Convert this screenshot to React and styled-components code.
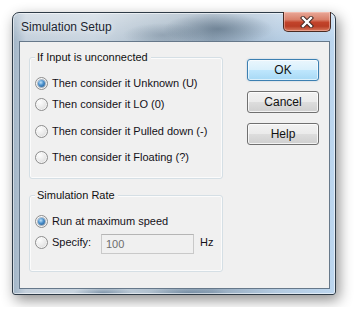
import React from 'react'
import styled, { createGlobalStyle, css } from 'styled-components'

const GlobalStyle = createGlobalStyle`
  body {
    margin: 0;
    background: #ffffff;
    font-family: "Liberation Sans", Arial, sans-serif;
  }
`

const Page = styled.div`
  padding: 12px;
`

const Window = styled.div`
  box-sizing: border-box;
  width: 324px;
  height: 283px;
  border: 1px solid #2e3b47;
  border-radius: 7px 7px 3px 3px;
  box-shadow: 3px 5px 14px rgba(0, 0, 0, 0.45), inset 0 0 0 1px rgba(255, 255, 255, 0.55);
  background:
    radial-gradient(ellipse 55px 16px at 205px 16px, rgba(70, 92, 112, 0.55), transparent),
    radial-gradient(ellipse 40px 12px at 150px 22px, rgba(90, 110, 130, 0.35), transparent),
    radial-gradient(ellipse 30px 6px at 90px 280px, rgba(60, 90, 120, 0.5), transparent),
    radial-gradient(ellipse 40px 6px at 175px 280px, rgba(60, 90, 120, 0.4), transparent),
    linear-gradient(180deg, rgba(255, 255, 255, 0.35), rgba(255, 255, 255, 0) 28px),
    linear-gradient(90deg, #9fb3c5 0%, #c4d0dc 4%, #c9d5e0 25%, #a9bac9 48%, #95a9bc 62%, #b3cae0 82%, #bcd6ef 100%);
  display: flex;
  flex-direction: column;
`

const TitleBar = styled.div`
  height: 28px;
  display: flex;
  justify-content: space-between;
  align-items: flex-start;
`

const Title = styled.div`
  padding: 7px 0 0 8px;
  font-size: 12px;
  color: #1b2530;
  text-shadow: 0 0 6px rgba(255, 255, 255, 0.9);
`

const CloseButton = styled.div`
  box-sizing: border-box;
  width: 48px;
  height: 20px;
  margin: -1px 4px 0 0;
  border: 1px solid #4a2a22;
  border-top: 0;
  border-radius: 0 0 5px 5px;
  background: linear-gradient(180deg, #e9a898 0%, #d9806a 40%, #c2432a 55%, #b93d25 75%, #d97a5e 100%);
  box-shadow: inset 0 0 0 1px rgba(255, 210, 200, 0.45);
  display: flex;
  align-items: center;
  justify-content: center;
`

const Client = styled.div`
  box-sizing: border-box;
  width: 311px;
  height: 248px;
  margin-left: 6px;
  border: 1px solid #66788a;
  background: #f0f0f0;
  display: flex;
  align-items: flex-start;
  padding: 15px 0 0 9px;
`

const Groups = styled.div`
  display: flex;
  flex-direction: column;
  gap: 16px;
`

const Group = styled.div`
  position: relative;
  box-sizing: border-box;
  width: 194px;
  height: ${props => props.$height}px;
  border: 1px solid #d5dfe5;
  border-radius: 3px;
  box-shadow: inset 0 0 0 1px rgba(255, 255, 255, 0.7);
  padding-left: 5px;
`

const Legend = styled.span`
  position: absolute;
  top: -8px;
  left: 5px;
  padding: 0 3px 0 2px;
  background: #f0f0f0;
  font-size: 11px;
  line-height: 14px;
  color: #111;
`

const Row = styled.div`
  display: flex;
  align-items: ${props => props.$top ? 'flex-start' : 'center'};
  height: ${props => props.$h || 16}px;
  margin-top: ${props => props.$mt}px;
`

const Radio = styled.span`
  box-sizing: border-box;
  flex: none;
  width: 13px;
  height: 13px;
  margin-top: ${props => props.$mt || 0}px;
  border-radius: 50%;
  border: 1px solid #8d8d8d;
  background: radial-gradient(circle at 35% 30%, #fdfdfd 0%, #ececec 45%, #d3d3d3 100%);
  box-shadow: inset 0 0 0 1px rgba(255, 255, 255, 0.6);
  display: flex;
  align-items: center;
  justify-content: center;
  ${props => props.$checked && css`
    &::after {
      content: '';
      width: 7px;
      height: 7px;
      border-radius: 50%;
      background: radial-gradient(circle at 40% 35%, #bfe3fa 0%, #4a8fcb 45%, #1d4f82 100%);
      box-shadow: 0 0 0 1px rgba(40, 80, 120, 0.35);
    }
  `}
`

const Label = styled.span`
  margin-left: 4px;
  width: ${props => props.$w ? `${props.$w}px` : 'auto'};
  font-size: 11px;
  line-height: 16px;
  color: #141018;
  white-space: nowrap;
`

const RateInput = styled.input`
  box-sizing: border-box;
  width: 93px;
  height: 20px;
  margin: 0;
  padding: 0 4px;
  border: 1px solid #c9c9c9;
  border-top-color: #b5b5b5;
  background: #f0f0f0;
  font-family: "Liberation Sans", Arial, sans-serif;
  font-size: 11px;
  color: #6d6d6d;
  outline: 0;
`

const Unit = styled.span`
  margin-left: 6px;
  font-size: 11px;
  line-height: 16px;
  color: #141018;
`

const Buttons = styled.div`
  display: flex;
  flex-direction: column;
  gap: 10px;
  margin: 2px 0 0 24px;
`

const Button = styled.div`
  box-sizing: border-box;
  width: 72px;
  height: 22px;
  border: 1px solid #707070;
  border-radius: 3px;
  background: linear-gradient(180deg, #f2f2f2 0%, #ebebeb 48%, #dddddd 52%, #cfcfcf 100%);
  box-shadow: inset 0 0 0 1px rgba(255, 255, 255, 0.75);
  display: flex;
  align-items: center;
  justify-content: center;
  font-size: 12px;
  color: #111;
  ${props => props.$default && css`
    border-color: #3c7fb1;
    background: linear-gradient(180deg, #eaf6fd 0%, #d9f0fc 48%, #bee6fd 52%, #a7d9f5 100%);
    box-shadow: inset 0 0 0 1px rgba(255, 255, 255, 0.6), 0 0 2px rgba(60, 127, 177, 0.35);
  `}
`

const CloseIcon = () => (
  <svg width="14" height="12" viewBox="0 0 14 12">
    <path d="M3 2 L11 10 M11 2 L3 10" stroke="#3a2520" strokeWidth="4.2" strokeLinecap="square" />
    <path d="M3 2 L11 10 M11 2 L3 10" stroke="#ffffff" strokeWidth="2.4" strokeLinecap="square" />
  </svg>
)

const options = [
  { label: 'Then consider it Unknown (U)', mt: 17, checked: true },
  { label: 'Then consider it LO (0)', mt: 5 },
  { label: 'Then consider it Pulled down (-)', mt: 11 },
  { label: 'Then consider it Floating (?)', mt: 10 },
]

export default function App() {
  return (
    <Page>
      <GlobalStyle />
      <Window>
        <TitleBar>
          <Title>Simulation Setup</Title>
          <CloseButton><CloseIcon /></CloseButton>
        </TitleBar>
        <Client>
          <Groups>
            <Group $height={122}>
              <Legend>If Input is unconnected</Legend>
              {options.map(o => (
                <Row key={o.label} $mt={o.mt}>
                  <Radio $checked={o.checked} />
                  <Label>{o.label}</Label>
                </Row>
              ))}
            </Group>
            <Group $height={77}>
              <Legend>Simulation Rate</Legend>
              <Row $mt={17}>
                <Radio $checked />
                <Label>Run at maximum speed</Label>
              </Row>
              <Row $mt={5} $h={20} $top>
                <Radio $mt={2} />
                <Label $w={49}>Specify:</Label>
                <RateInput value="100" disabled readOnly />
                <Unit>Hz</Unit>
              </Row>
            </Group>
          </Groups>
          <Buttons>
            <Button $default>OK</Button>
            <Button>Cancel</Button>
            <Button>Help</Button>
          </Buttons>
        </Client>
      </Window>
    </Page>
  )
}
